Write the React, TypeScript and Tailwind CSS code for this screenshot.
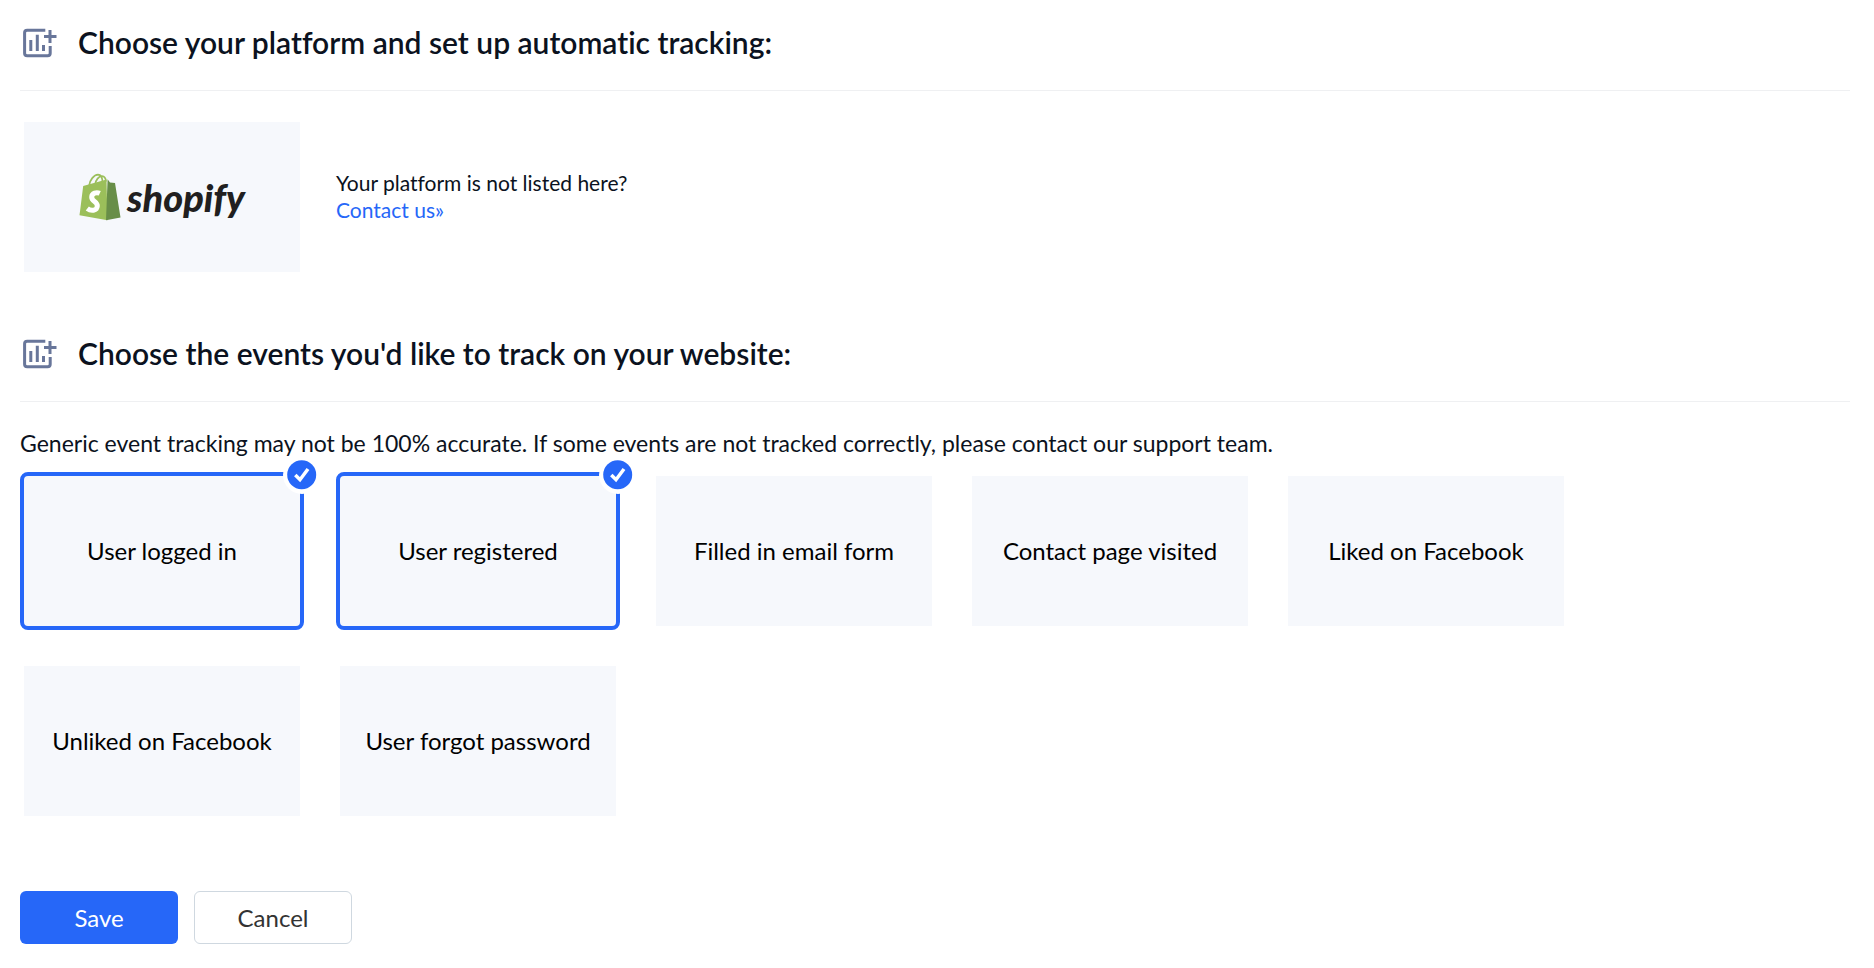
import { useState } from 'react'
import type { ReactNode } from 'react'
import clsx from 'clsx'

const EVENTS = [
  'User logged in',
  'User registered',
  'Filled in email form',
  'Contact page visited',
  'Liked on Facebook',
  'Unliked on Facebook',
  'User forgot password',
]

function AddChartIcon() {
  return (
    <svg width="40" height="36" viewBox="0 0 40 36" fill="none" stroke="#68769a" strokeWidth="3" aria-hidden="true">
      <path d="M25.3 6.3H7.2C5.6 6.3 4.6 7.2 4.6 8.8V29.2C4.6 30.8 5.6 31.7 7.2 31.7H27.6C29.2 31.7 30.2 30.8 30.2 29.2V22" />
      <path d="M30 6V19M24 12.5H36.5" />
      <path d="M10.8 16V27M17.3 10.7V27M23.5 21V27" />
    </svg>
  )
}

function CheckBadge() {
  return (
    <svg className="absolute -top-5 -right-[21px]" width="38" height="38" viewBox="0 0 38 38" aria-hidden="true">
      <circle cx="19" cy="19" r="19" fill="#fff" />
      <circle cx="18.7" cy="18.7" r="14.5" fill="#2667f8" />
      <path d="M12.3 19L17 23.7L25 13" fill="none" stroke="#fff" strokeWidth="3.5" />
    </svg>
  )
}

function ShopifyLogo() {
  return (
    <span className="flex items-center gap-[6px]">
      <svg width="42" height="48" viewBox="0 0 42 48" aria-hidden="true">
        <path
          d="M10 13C10.6 7 15 1.8 19 1.7C22.5 1.7 23.5 6 23.5 10M16 12C16.5 7 20 3 23 3.2C25.5 3.4 26.8 6 27 8.5"
          fill="none"
          stroke="#9bbf5a"
          strokeWidth="1.7"
        />
        <path d="M4.2 13L27.5 6.5L28.5 47.3L0.5 42.2Z" fill="#9bbf5a" />
        <path d="M28.6 6.2L31 9.4L36 9.9L41.5 44.5L27 47.3Z" fill="#688e48" />
        <path
          d="M20.8 20.3C17.5 18.8 12.8 20 12.7 24C12.6 28.6 18.5 28.5 18.3 33C18.1 38 11.8 38.3 8.3 35.5"
          fill="none"
          stroke="#fff"
          strokeWidth="5"
        />
      </svg>
      <span className="text-[38px] leading-[48px] font-black italic text-[#211f20]">shopify</span>
    </span>
  )
}

function SectionHeader({ children }: { children: ReactNode }) {
  return (
    <header className="flex items-center gap-[18px] border-b border-[#eff0f2] pt-[23px] pb-[29px]">
      <AddChartIcon />
      <h2 className="text-[30px] leading-[38px] font-semibold">{children}</h2>
    </header>
  )
}

function EventCard({ label, checked, onChange }: { label: string; checked: boolean; onChange: () => void }) {
  return (
    <label
      className={clsx(
        'relative flex h-[158px] w-[284px] cursor-pointer items-center justify-center border-4 bg-[#f6f8fc] bg-clip-padding text-2xl text-black',
        checked ? 'rounded-lg border-[#2667f8]' : 'border-transparent'
      )}
    >
      <input type="checkbox" className="sr-only" checked={checked} onChange={onChange} />
      {label}
      {checked && <CheckBadge />}
    </label>
  )
}

export default function App() {
  const [selected, setSelected] = useState(['User logged in', 'User registered'])

  const toggle = (name: string) =>
    setSelected(selected.includes(name) ? selected.filter((item) => item !== name) : [...selected, name])

  return (
    <main className="pr-6 pl-5 font-['Lato',sans-serif] text-[#0b1220] [font-variant-ligatures:none]">
      <section>
        <SectionHeader>Choose your platform and set up automatic tracking:</SectionHeader>
        <div className="mt-[27px] flex items-center gap-8">
          <button
            type="button"
            className="flex h-[158px] w-[284px] items-center justify-center border-4 border-transparent bg-[#f6f8fc] bg-clip-padding"
          >
            <ShopifyLogo />
          </button>
          <div className="pb-0.5 text-[21px] leading-[27px]">
            <p>Your platform is not listed here?</p>
            <a href="#contact" className="text-[#2667f8]">
              Contact us»
            </a>
          </div>
        </div>
      </section>

      <section className="mt-[35px]">
        <SectionHeader>Choose the events you'd like to track on your website:</SectionHeader>
        <p className="mt-[26px] mb-[14px] text-[23px] leading-[30px]">
          Generic event tracking may not be 100% accurate. If some events are not tracked correctly, please contact our
          support team.
        </p>
        <div className="flex flex-wrap gap-8">
          {EVENTS.map((name) => (
            <EventCard key={name} label={name} checked={selected.includes(name)} onChange={() => toggle(name)} />
          ))}
        </div>
      </section>

      <div className="mt-[71px] flex gap-4 pb-6 text-2xl">
        <button type="submit" className="h-[53px] w-[158px] rounded-md bg-[#2667f8] text-white">
          Save
        </button>
        <button type="button" className="h-[53px] w-[158px] rounded-md border border-[#cfd8e0] text-[#333]">
          Cancel
        </button>
      </div>
    </main>
  )
}
